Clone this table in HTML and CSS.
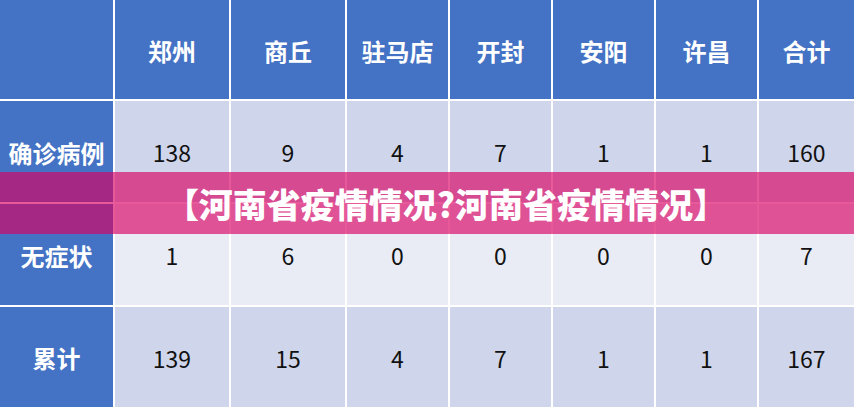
FILE: index.html
```html
<!DOCTYPE html>
<html lang="zh-CN">
<head>
<meta charset="utf-8">
<title>河南省疫情情况</title>
<link rel="stylesheet" href="styles.css">
</head>
<body>
<div class="page">
  <div class="table">
    <div class="cell head corner"></div>
    <div class="cell head">郑州</div>
    <div class="cell head">商丘</div>
    <div class="cell head">驻马店</div>
    <div class="cell head">开封</div>
    <div class="cell head">安阳</div>
    <div class="cell head">许昌</div>
    <div class="cell head">合计</div>

    <div class="cell label">确诊病例</div>
    <div class="cell dark">138</div>
    <div class="cell dark">9</div>
    <div class="cell dark">4</div>
    <div class="cell dark">7</div>
    <div class="cell dark">1</div>
    <div class="cell dark">1</div>
    <div class="cell dark">160</div>

    <div class="cell label">无症状</div>
    <div class="cell light">1</div>
    <div class="cell light">6</div>
    <div class="cell light">0</div>
    <div class="cell light">0</div>
    <div class="cell light">0</div>
    <div class="cell light">0</div>
    <div class="cell light">7</div>

    <div class="cell label">累计</div>
    <div class="cell dark">139</div>
    <div class="cell dark">15</div>
    <div class="cell dark">4</div>
    <div class="cell dark">7</div>
    <div class="cell dark">1</div>
    <div class="cell dark">1</div>
    <div class="cell dark">167</div>
  </div>
  <div class="banner">【河南省疫情情况?河南省疫情情况】</div>
</div>
</body>
</html>
```

FILE: styles.css
```css
html, body {
  margin: 0;
  padding: 0;
  background: #ffffff;
}

.page {
  position: relative;
  width: 854px;
  height: 407px;
  overflow: hidden;
  font-family: "Noto Sans CJK SC", "Noto Sans", sans-serif;
}

.table {
  display: grid;
  grid-template-columns: 113px 114px 114px 101px 101px 101px 101px 95px;
  grid-template-rows: 99px 101px 101px 100px;
  column-gap: 2px;
  row-gap: 2px;
  background: #ffffff;
}

.table .cell {
  display: flex;
  align-items: center;
  justify-content: center;
  font-size: 23px;
  padding-top: 1px;
  box-sizing: border-box;
}

.head {
  background: #4472c4;
  color: #ffffff;
  font-weight: 700;
}

.table .head,
.table .label {
  font-size: 24px;
}

.label {
  background: #4472c4;
  color: #ffffff;
  font-weight: 700;
}

.dark {
  background: #cfd5ea;
  color: #111111;
}

.light {
  background: #e9ebf5;
  color: #111111;
}

.banner {
  position: absolute;
  left: 0;
  top: 172px;
  width: 854px;
  height: 62px;
  box-sizing: border-box;
  padding-left: 38px;
  display: flex;
  align-items: center;
  justify-content: center;
  background: rgba(218, 0, 98, 0.65);
  color: #ffffff;
  font-size: 34px;
  font-weight: 900;
}
```
